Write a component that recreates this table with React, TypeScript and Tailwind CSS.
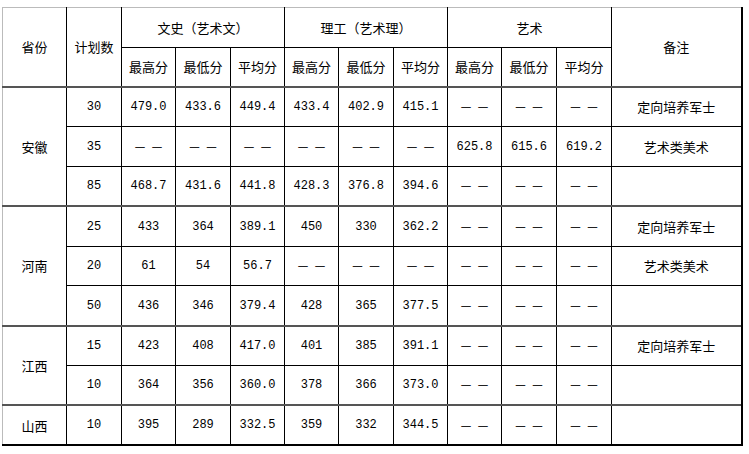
import React from 'react';

const D = '－－';

type Row = {
  plan: string;
  vals: string[];
  note: string;
};

type Group = { prov: string; rows: Row[] };

const groups: Group[] = [
  {
    prov: '安徽',
    rows: [
      { plan: '30', vals: ['479.0', '433.6', '449.4', '433.4', '402.9', '415.1', D, D, D], note: '定向培养军士' },
      { plan: '35', vals: [D, D, D, D, D, D, '625.8', '615.6', '619.2'], note: '艺术类美术' },
      { plan: '85', vals: ['468.7', '431.6', '441.8', '428.3', '376.8', '394.6', D, D, D], note: '' },
    ],
  },
  {
    prov: '河南',
    rows: [
      { plan: '25', vals: ['433', '364', '389.1', '450', '330', '362.2', D, D, D], note: '定向培养军士' },
      { plan: '20', vals: ['61', '54', '56.7', D, D, D, D, D, D], note: '艺术类美术' },
      { plan: '50', vals: ['436', '346', '379.4', '428', '365', '377.5', D, D, D], note: '' },
    ],
  },
  {
    prov: '江西',
    rows: [
      { plan: '15', vals: ['423', '408', '417.0', '401', '385', '391.1', D, D, D], note: '定向培养军士' },
      { plan: '10', vals: ['364', '356', '360.0', '378', '366', '373.0', D, D, D], note: '' },
    ],
  },
  {
    prov: '山西',
    rows: [{ plan: '10', vals: ['395', '289', '332.5', '359', '332', '344.5', D, D, D], note: '' }],
  },
];

const widths = [64, 55, 54, 55, 54, 54, 55, 54, 54, 55, 55, 130];

const cjk = "font-['Noto_Sans_CJK_SC',sans-serif] text-[13px]";
const num = "font-['Liberation_Mono','Noto_Sans_CJK_SC',monospace] text-[12px]";

function Cell({ v, cls = '' }: { v: string; cls?: string }) {
  const isNum = /^[0-9.]+$/.test(v);
  const isDash = v === D;
  return (
    <td
      className={`border border-black text-center align-middle p-0 ${isNum ? num : cjk} ${
        isDash ? 'tracking-[4px] pl-[4px] text-[#222]' : ''
      } ${cls}`}
    >
      {v}
    </td>
  );
}

export default function App() {
  const last = groups.length - 1;
  return (
    <div className="bg-white w-[749px] h-[454px] pt-[7px] pl-[2px] text-black">
      <table className="border-collapse table-fixed w-[740px]">
        <colgroup>
          {widths.map((w, i) => (
            <col key={i} style={{ width: w }} />
          ))}
        </colgroup>
        <thead>
          <tr className="h-[39.5px]">
            <th rowSpan={2} className={`border border-black border-l-[#bbb] border-t-[#bbb] font-normal ${cjk}`}>省份</th>
            <th rowSpan={2} className={`border border-black border-t-[#bbb] font-normal ${cjk}`}>计划数</th>
            <th colSpan={3} className={`border border-black border-t-[#bbb] font-normal ${cjk}`}>文史（艺术文）</th>
            <th colSpan={3} className={`border border-black border-t-[#bbb] font-normal ${cjk}`}>理工（艺术理）</th>
            <th colSpan={3} className={`border border-black border-t-[#bbb] font-normal ${cjk}`}>艺术</th>
            <th rowSpan={2} className={`border border-black border-r-2 border-t-[#bbb] font-normal ${cjk}`}>备注</th>
          </tr>
          <tr className="h-[40px]">
            {['最高分', '最低分', '平均分', '最高分', '最低分', '平均分', '最高分', '最低分', '平均分'].map((t, i) => (
              <th key={i} className={`border border-black font-normal ${cjk}`}>{t}</th>
            ))}
          </tr>
        </thead>
        <tbody>
          {groups.map((g, gi) =>
            g.rows.map((r, ri) => {
              const top = ri === 0 ? 'border-t-2 border-t-[#555]' : '';
              const bottom = gi === last ? 'border-b-2' : '';
              return (
                <tr key={g.prov + ri} className="h-[39.8px]">
                  {ri === 0 && (
                    <td
                      rowSpan={g.rows.length}
                      className={`border border-black border-l-[#bbb] border-t-2 border-t-[#555] text-center align-middle p-0 ${bottom} ${cjk}`}
                    >
                      {g.prov}
                    </td>
                  )}
                  <Cell v={r.plan} cls={`${top} ${bottom}`} />
                  {r.vals.map((v, i) => (
                    <Cell key={i} v={v} cls={`${top} ${bottom}`} />
                  ))}
                  <Cell v={r.note} cls={`${top} ${bottom} border-r-2`} />
                </tr>
              );
            })
          )}
        </tbody>
      </table>
    </div>
  );
}
